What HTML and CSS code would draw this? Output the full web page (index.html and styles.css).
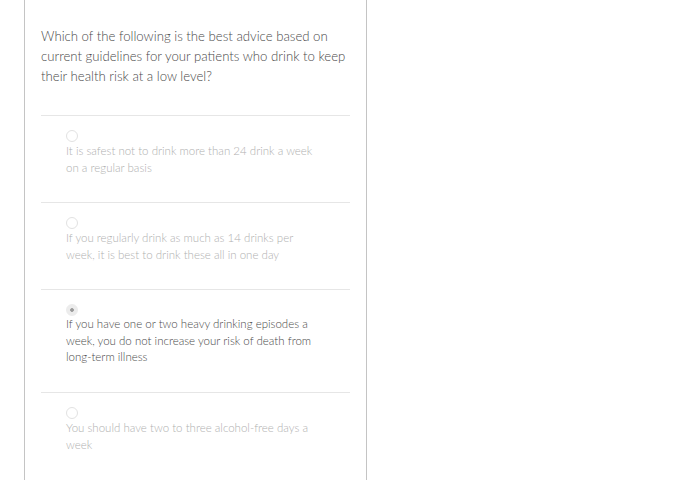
FILE: index.html
```html
<!DOCTYPE html>
<html>
<head>
<meta charset="utf-8">
<link rel="stylesheet" href="styles.css">
</head>
<body>
<div class="card">
  <p class="question">Which of the following is the best advice based on current guidelines for your patients who drink to keep their health risk at a low level?</p>
  <ul class="options">
    <li class="option">
      <span class="radio"></span>
      <p class="label">It is safest not to drink more than 24 drink a week<br>on a regular basis</p>
    </li>
    <li class="option">
      <span class="radio"></span>
      <p class="label">If you regularly drink as much as 14 drinks per<br>week, it is best to drink these all in one day</p>
    </li>
    <li class="option selected">
      <span class="radio"></span>
      <p class="label">If you have one or two heavy drinking episodes a<br>week, you do not increase your risk of death from<br>long-term illness</p>
    </li>
    <li class="option">
      <span class="radio"></span>
      <p class="label">You should have two to three alcohol-free days a<br>week</p>
    </li>
  </ul>
</div>
</body>
</html>
```
FILE: styles.css
```css
html, body {
  margin: 0;
  padding: 0;
  background: #fff;
}
body {
  font-family: Lato, "Open Sans", sans-serif;
  height: 480px;
  overflow: hidden;
}
.card {
  margin-left: 24px;
  width: 343px;
  min-height: 480px;
  border-left: 1px solid #c4c4c4;
  border-right: 1px solid #c4c4c4;
  padding: 26px 16px 0 16px;
  box-sizing: border-box;
}
.question {
  margin: 0 0 29px 0;
  font-size: 13.2px;
  font-weight: 300;
  line-height: 20px;
  color: #4a4a4a;
}
.options {
  list-style: none;
  margin: 0;
  padding: 0;
}
.option {
  border-top: 1px solid #e6e6e6;
  padding: 14px 0 26px 25px;
  display: flex;
  flex-direction: column;
  align-items: flex-start;
}
.radio {
  width: 10px;
  height: 10px;
  border: 1px solid #e2e2e2;
  border-radius: 50%;
  box-sizing: content-box;
}
.label {
  margin: 0;
  font-size: 11.5px;
  font-weight: 300;
  line-height: 17px;
  color: #b0b0b0;
}
.selected .label {
  color: #4a4a4a;
  line-height: 16.5px;
}
.selected .radio {
  border-color: #ececec;
  background: radial-gradient(circle, #9a9a9a 0 1.5px, #ececec 2.2px);
}
```
